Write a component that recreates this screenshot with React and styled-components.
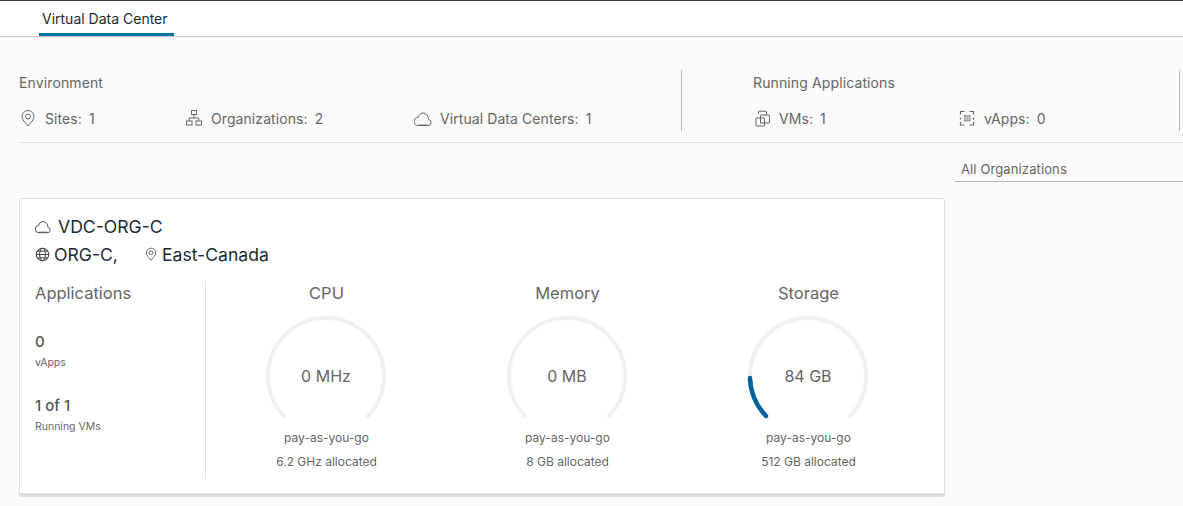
import React from "react";
import styled, { createGlobalStyle } from "styled-components";

const Global = createGlobalStyle`
  html, body { margin: 0; padding: 0; background: #fafafa; }
  body { font-family: Inter, "Open Sans", sans-serif; color: #565656; overflow: hidden; }
`;

const Page = styled.div`
  width: 1183px;
  height: 506px;
  overflow: hidden;
  background: #fafafa;
`;

const TabBar = styled.nav`
  display: flex;
  height: 35px;
  padding-left: 39px;
  background: #fff;
  border-top: 1px solid #3a3a3a;
  border-bottom: 1px solid #ccc;
`;

const Tab = styled.div`
  width: 135px;
  height: 35px;
  padding-left: 3px;
  box-sizing: border-box;
  border-bottom: 3px solid #0072a3;
  margin-bottom: -1px;
  font-size: 14px;
  line-height: 35px;
  color: #1b2a32;
`;

const Summary = styled.section`
  display: flex;
  margin: 33px 0 0 19px;
  height: 61px;
  padding-bottom: 11px;
  border-bottom: 1px solid #dedede;
`;

const Group = styled.div`
  width: ${(p) => p.$width}px;
  padding-left: ${(p) => p.$inset || 0}px;
  box-sizing: border-box;
  border-right: 1px solid #b8b8b8;
  flex-shrink: 0;
`;

const GroupTitle = styled.div`
  font-size: 14px;
  line-height: 20px;
  letter-spacing: 0.12px;
  margin-top: 3px;
  color: #666;
`;

const StatRow = styled.div`
  display: flex;
  margin-top: 15px;
`;

const Stat = styled.div`
  display: flex;
  align-items: center;
  width: ${(p) => p.$width}px;
  height: 20px;
  font-size: 14px;
  letter-spacing: 0.08px;
  color: #666;
  svg { flex-shrink: 0; margin-right: 8px; color: #666; }
  span + span { margin-left: 7px; }
`;

const FilterRow = styled.div`
  display: flex;
  justify-content: flex-end;
  margin-top: 13px;
`;

const Filter = styled.div`
  width: 228px;
  height: 26px;
  padding-left: 6px;
  box-sizing: border-box;
  border-bottom: 1px solid #b3b3b3;
  font-size: 13px;
  letter-spacing: 0.12px;
  line-height: 26px;
  color: #666;
`;

const Card = styled.article`
  width: 926px;
  height: 299px;
  margin: 16px 0 0 19px;
  padding: 15px 15px 0;
  box-sizing: border-box;
  background: #fff;
  border: 1px solid #dedede;
  border-bottom-width: 4px;
  border-radius: 3px;
`;

const CardTitle = styled.div`
  display: flex;
  align-items: center;
  height: 24px;
  font-size: 17.6px;
  color: #1b2a32;
  svg { margin-right: 7px; color: #444; }
`;

const CardMeta = styled.div`
  display: flex;
  align-items: center;
  height: 24px;
  margin-top: 4px;
  font-size: 17.6px;
  color: #1b2a32;
  svg { margin-right: 4px; color: #444; }
`;

const MetaItem = styled.div`
  display: flex;
  align-items: center;
  margin-right: 26px;
`;

const CardBody = styled.div`
  display: flex;
  margin-top: 15px;
`;

const Apps = styled.div`
  width: 170px;
  height: 198px;
  border-right: 1px solid #dedede;
  flex-shrink: 0;
`;

const SectionTitle = styled.div`
  font-size: 16.5px;
  line-height: 24px;
  color: #666;
`;

const Figure = styled.div`
  font-size: 15px;
  font-weight: 500;
  line-height: 20px;
  color: #565656;
  margin-top: ${(p) => p.$top}px;
`;

const FigureLabel = styled.div`
  font-size: 10.5px;
  line-height: 14px;
  margin-top: 4px;
  color: #666;
`;

const Gauges = styled.div`
  display: grid;
  grid-template-columns: repeat(3, 241px);
`;

const GaugeCell = styled.div`
  display: flex;
  flex-direction: column;
  align-items: center;
`;

const Dial = styled.div`
  position: relative;
  width: 124px;
  height: 105px;
  margin: 11px 1px 0 0;
  svg { display: block; }
`;

const DialValue = styled.div`
  position: absolute;
  left: 0;
  right: 0;
  top: 48px;
  text-align: center;
  font-size: 16px;
  line-height: 24px;
  color: #666;
`;

const Note = styled.div`
  font-size: 12px;
  line-height: 16px;
  color: #666;
  margin-top: ${(p) => p.$top}px;
`;

const Icon = ({ size = 18, children }) => (
  <svg width={size} height={size} viewBox="0 0 36 36" fill="none" stroke="currentColor" strokeWidth="2">
    {children}
  </svg>
);

const Pin = ({ size }) => (
  <Icon size={size}>
    <path d="M18 34 C12 27 6 21 6 15 A12 12 0 0 1 30 15 C30 21 24 27 18 34 Z" />
    <circle cx="18" cy="15" r="5" />
  </Icon>
);

const Org = () => (
  <Icon>
    <rect x="13" y="3" width="10" height="8" />
    <rect x="3" y="24" width="11" height="8" />
    <rect x="22" y="24" width="11" height="8" />
    <path d="M18 11v7M8.5 24v-6h19v6" />
  </Icon>
);

const Cloud = ({ size }) => (
  <Icon size={size}>
    <path d="M9 33 H27 A6 6 0 0 0 29 21 C29 14 24 8 18 8 C13 8 9 12 8 17 A8 8 0 0 0 9 33 Z" />
    <path d="M9 32 H27" strokeWidth="3" opacity="0.6" />
  </Icon>
);

const Vm = () => (
  <Icon>
    <path d="M11 10V6a1.5 1.5 0 0 1 1.5-1.5h13A1.5 1.5 0 0 1 27 6v5" />
    <rect x="15" y="12" width="18" height="16" rx="1" />
    <rect x="6" y="18" width="17" height="16" rx="1" fill="#fafafa" />
    <path d="M15 18v10h8" />
  </Icon>
);

const Vapp = () => (
  <Icon>
    <path d="M5 11V5h8M23 5h8v6M5 17v4M31 17v4M5 26v6h8M23 32h8v-6" strokeWidth="2.4" />
    <rect x="12" y="12" width="13" height="13" fill="currentColor" stroke="none" opacity="0.75" />
    <path d="M16.5 12v13M20.5 12v13M12 16.5h13M12 20.5h13" stroke="#fafafa" strokeWidth="1" />
  </Icon>
);

const Globe = () => (
  <Icon size={15}>
    <circle cx="18" cy="18" r="15" strokeWidth="2.6" />
    <ellipse cx="18" cy="18" rx="7" ry="15" strokeWidth="2.4" />
    <path d="M3 18h30M5.5 10h25M5.5 26h25" strokeWidth="2.4" />
  </Icon>
);

const Gauge = ({ value, arc }) => (
  <Dial>
    <svg width="124" height="105" viewBox="0 0 124 105" fill="none" strokeLinecap="round">
      <path d="M20 100 A58 58 0 1 1 104 100" stroke="#f0f0f0" strokeWidth="4" />
      {arc && <path d={arc} stroke="#00629c" strokeWidth="4.5" />}
    </svg>
    <DialValue>{value}</DialValue>
  </Dial>
);

const metrics = [
  { title: "CPU", value: "0 MHz", allocated: "6.2 GHz allocated" },
  { title: "Memory", value: "0 MB", allocated: "8 GB allocated" },
  { title: "Storage", value: "84 GB", allocated: "512 GB allocated", arc: "M4 62 A58 58 0 0 0 20 100" },
];

const App = () => (
  <Page>
    <Global />
    <TabBar>
      <Tab>Virtual Data Center</Tab>
    </TabBar>
    <Summary>
      <Group $width={663}>
        <GroupTitle>Environment</GroupTitle>
        <StatRow>
          <Stat $width={166}>
            <Pin /><span>Sites:</span><span>1</span>
          </Stat>
          <Stat $width={229}>
            <Org /><span>Organizations:</span><span>2</span>
          </Stat>
          <Stat $width={250}>
            <Cloud /><span>Virtual Data Centers:</span><span>1</span>
          </Stat>
        </StatRow>
      </Group>
      <Group $width={498} $inset={71}>
        <GroupTitle>Running Applications</GroupTitle>
        <StatRow>
          <Stat $width={205}>
            <Vm /><span>VMs:</span><span>1</span>
          </Stat>
          <Stat $width={150}>
            <Vapp /><span>vApps:</span><span>0</span>
          </Stat>
        </StatRow>
      </Group>
    </Summary>
    <FilterRow>
      <Filter>All Organizations</Filter>
    </FilterRow>
    <Card>
      <CardTitle>
        <Cloud size={16} />VDC-ORG-C
      </CardTitle>
      <CardMeta>
        <MetaItem><Globe />ORG-C,</MetaItem>
        <MetaItem><Pin size={14} />East-Canada</MetaItem>
      </CardMeta>
      <CardBody>
        <Apps>
          <SectionTitle>Applications</SectionTitle>
          <Figure $top={27}>0</Figure>
          <FigureLabel>vApps</FigureLabel>
          <Figure $top={26}>1 of 1</Figure>
          <FigureLabel>Running VMs</FigureLabel>
        </Apps>
        <Gauges>
          {metrics.map((m) => (
            <GaugeCell key={m.title}>
              <SectionTitle>{m.title}</SectionTitle>
              <Gauge value={m.value} arc={m.arc} />
              <Note $top={9}>pay-as-you-go</Note>
              <Note $top={8}>{m.allocated}</Note>
            </GaugeCell>
          ))}
        </Gauges>
      </CardBody>
    </Card>
  </Page>
);

export default App;
